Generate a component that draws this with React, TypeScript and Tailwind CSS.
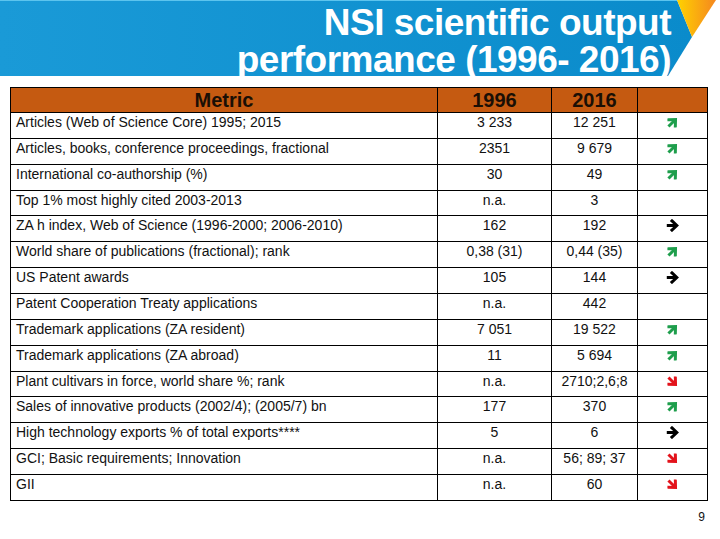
import React from "react";

type Trend = "up" | "right" | "down" | "";

type Row = {
  metric: string;
  y1996: string;
  y2016: string;
  trend: Trend;
};

const rows: Row[] = [
  { metric: "Articles (Web of Science Core) 1995; 2015", y1996: "3 233", y2016: "12 251", trend: "up" },
  { metric: "Articles, books, conference proceedings, fractional", y1996: "2351", y2016: "9 679", trend: "up" },
  { metric: "International co-authorship (%)", y1996: "30", y2016: "49", trend: "up" },
  { metric: "Top 1% most highly cited 2003-2013", y1996: "n.a.", y2016: "3", trend: "" },
  { metric: "ZA h index, Web of Science (1996-2000; 2006-2010)", y1996: "162", y2016: "192", trend: "right" },
  { metric: "World share of publications (fractional); rank", y1996: "0,38 (31)", y2016: "0,44 (35)", trend: "up" },
  { metric: "US Patent awards", y1996: "105", y2016: "144", trend: "right" },
  { metric: "Patent Cooperation Treaty applications", y1996: "n.a.", y2016: "442", trend: "" },
  { metric: "Trademark applications (ZA resident)", y1996: "7 051", y2016: "19 522", trend: "up" },
  { metric: "Trademark applications (ZA abroad)", y1996: "11", y2016: "5 694", trend: "up" },
  { metric: "Plant cultivars in force, world share %; rank", y1996: "n.a.", y2016: "2710;2,6;8", trend: "down" },
  { metric: "Sales of innovative products (2002/4); (2005/7) bn", y1996: "177", y2016: "370", trend: "up" },
  { metric: "High technology exports % of total exports****", y1996: "5", y2016: "6", trend: "right" },
  { metric: "GCI; Basic requirements; Innovation", y1996: "n.a.", y2016: "56; 89; 37", trend: "down" },
  { metric: "GII", y1996: "n.a.", y2016: "60", trend: "down" },
];

const TrendArrow = ({ trend }: { trend: Trend }) => {
  if (!trend) return null;
  const color = trend === "up" ? "#1e9e4c" : trend === "down" ? "#e3131b" : "#000000";
  const rotate = trend === "up" ? "-rotate-45" : trend === "down" ? "rotate-45" : "";
  return (
    <svg width="13" height="13" viewBox="0 0 10 10" className={`inline-block ${rotate}`}>
      <line x1="0.6" y1="5" x2="8" y2="5" stroke={color} strokeWidth="2.3" />
      <polyline
        points="4.6,1.5 8.3,5 4.6,8.5"
        fill="none"
        stroke={color}
        strokeWidth="2.3"
        strokeLinecap="square"
      />
    </svg>
  );
};

const Banner = () => {
  return (
    <div className="relative h-[76px] w-[720px]">
      <svg className="absolute inset-0" width="720" height="80" viewBox="0 0 720 80">
        <defs>
          <linearGradient id="blue" x1="0" y1="0" x2="1" y2="0">
            <stop offset="0" stopColor="#1a9ad7" />
            <stop offset="1" stopColor="#0a8bcb" />
          </linearGradient>
          <linearGradient id="sun" x1="0" y1="0" x2="1" y2="0">
            <stop offset="0" stopColor="#ffd200" />
            <stop offset="1" stopColor="#f5871f" />
          </linearGradient>
        </defs>
        <polygon points="0,0 677,0 692,37 668,76 0,76" fill="url(#blue)" />
        <line x1="0" y1="0.5" x2="677" y2="0.5" stroke="#5cc4ee" strokeWidth="1" />
        <polygon points="677,0 716,0 692,37" fill="url(#sun)" />
      </svg>
      <div className="relative flex flex-col items-end pr-[49px] pt-[4px] font-['Liberation_Sans',Arial,sans-serif] text-[37px] font-bold leading-[37px] tracking-[-0.5px] text-white">
        <span>NSI scientific output</span>
        <span>performance (1996- 2016)</span>
      </div>
    </div>
  );
};

export default function App() {
  return (
    <div className="relative h-[539px] w-[720px] overflow-hidden bg-white font-['Liberation_Sans',Arial,sans-serif] text-[#111]">
      <Banner />
      <table className="ml-[10px] mt-[11px] w-[697px] table-fixed border-collapse">
        <colgroup>
          <col className="w-[427px]" />
          <col className="w-[114px]" />
          <col className="w-[86px]" />
          <col className="w-[70px]" />
        </colgroup>
        <thead>
          <tr className="h-[25px] bg-[#c55a11] text-[20px] font-bold leading-[22px] text-[#1a0f05]">
            <th className="border border-black p-0 text-center">Metric</th>
            <th className="border border-black p-0 text-center">1996</th>
            <th className="border border-black p-0 text-center">2016</th>
            <th className="border border-black p-0"></th>
          </tr>
        </thead>
        <tbody className="text-[14px] leading-[18px]">
          {rows.map((r) => (
            <tr key={r.metric} className="h-[25.87px]">
              <td className="border border-black px-[5px] py-0 align-top whitespace-nowrap">{r.metric}</td>
              <td className="border border-black p-0 text-center align-top">{r.y1996}</td>
              <td className="border border-black p-0 text-center align-top whitespace-nowrap">{r.y2016}</td>
              <td className="border border-black p-0 text-center align-top">
                <div className="flex h-[19px] items-center justify-center">
                  <TrendArrow trend={r.trend} />
                </div>
              </td>
            </tr>
          ))}
        </tbody>
      </table>
      <div className="mt-[9px] w-[705px] text-right text-[12px] leading-[14px]">9</div>
    </div>
  );
}
